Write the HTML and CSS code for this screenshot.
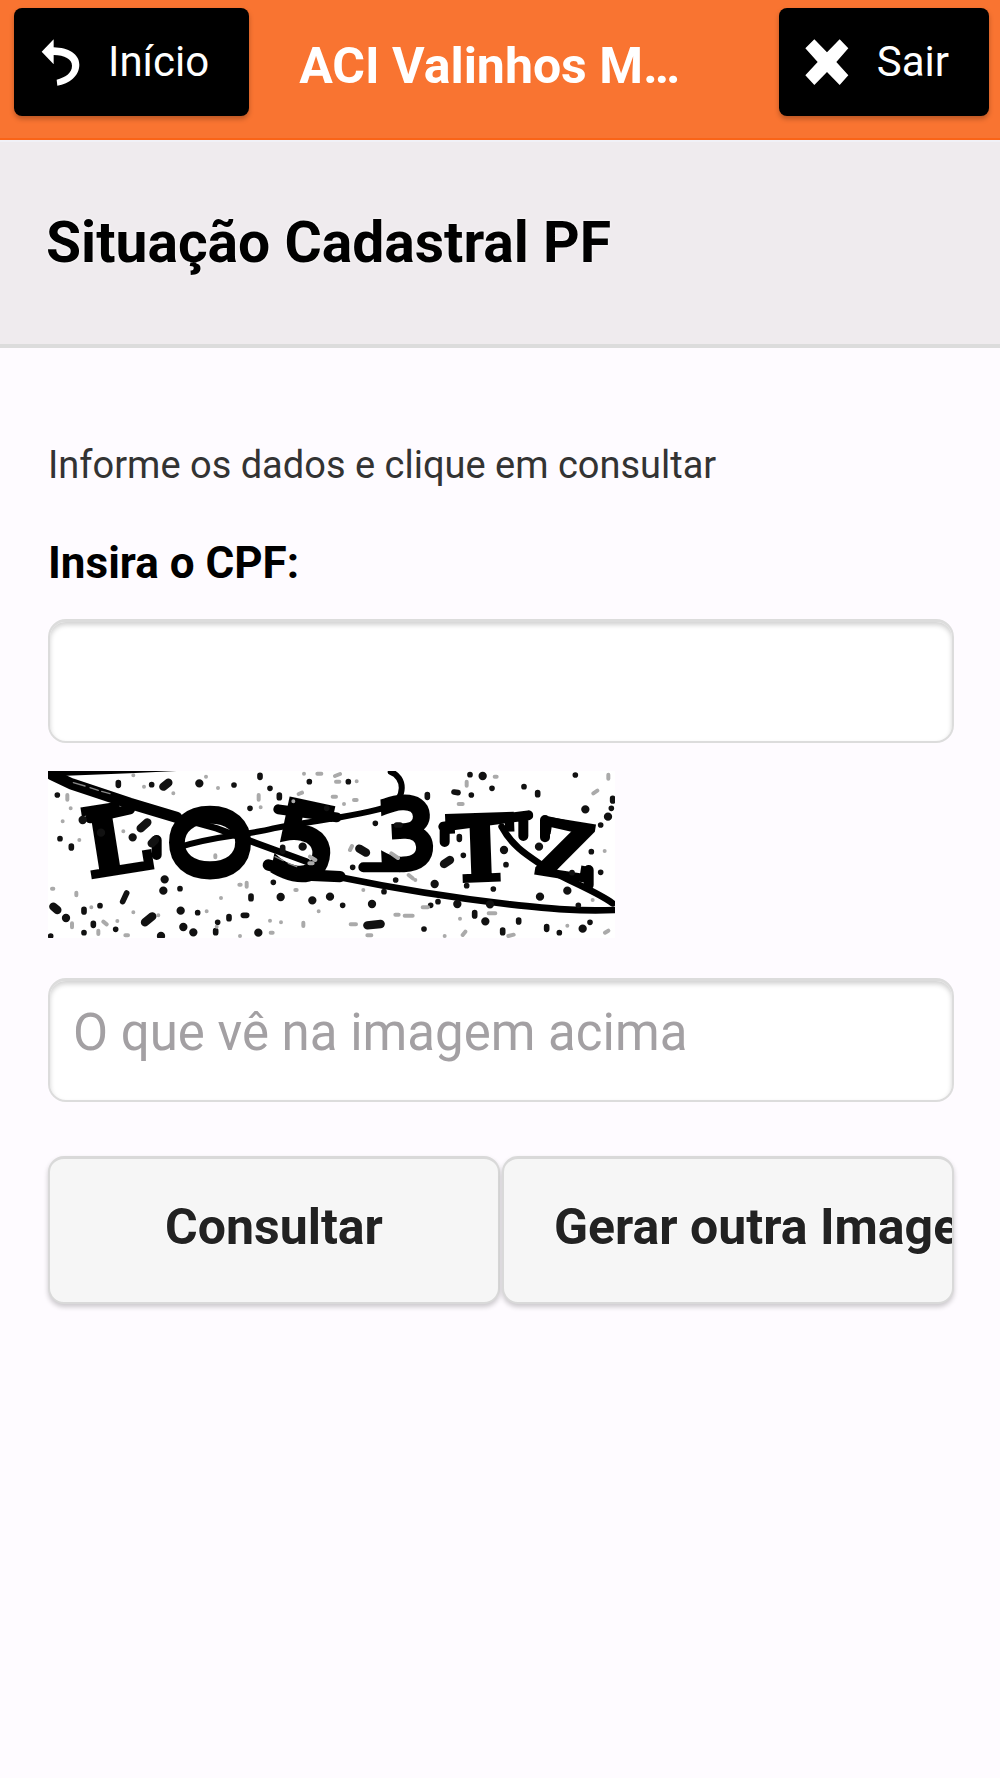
FILE: index.html
```html
<!DOCTYPE html>
<html lang="pt-BR">
<head>
<meta charset="utf-8">
<meta name="viewport" content="width=device-width, initial-scale=1">
<title>Situação Cadastral PF</title>
<link rel="stylesheet" href="styles.css">
</head>
<body>
<header class="topbar">
  <button class="nav-btn" type="button">
    <svg class="icon-back" viewBox="120 114 120 144" aria-hidden="true">
      <path d="M125 155L161 118V142C205 143 238 162 238 194C238 228 208 251 172 257L170 239C196 231 216 220 216 197C216 177 194 166 161 165V193Z" fill="#fff"/>
    </svg>
    <span>Início</span>
  </button>
  <p class="app-title">ACI Valinhos M…</p>
  <button class="nav-btn" type="button">
    <svg class="icon-close" viewBox="410 114 132 144" aria-hidden="true">
      <path d="M438 118L476 157L514 118L540 145L504 186L540 226L514 255L476 216L438 255L411 226L448 186L411 145Z" fill="#fff"/>
    </svg>
    <span>Sair</span>
  </button>
</header>
<div class="page-head">
  <h1>Situação Cadastral PF</h1>
</div>
<main>
  <form class="query">
    <p class="hint">Informe os dados e clique em consultar</p>
    <label class="label" for="cpf">Insira o CPF:</label>
    <input class="field" id="cpf" type="text">
    <svg class="captcha" viewBox="54 33 1701 501" role="img" aria-label="Captcha">
      <rect x="54" y="33" width="1701" height="501" fill="#fff"/>
      <g class="glyphs">
        <text class="slab" font-size="285" transform="rotate(-9 190 350)" x="176" y="352">L</text>
        <text class="plain" font-size="292" transform="rotate(90 537 248)" x="422" y="354">O</text>
        <text class="plain" font-size="300" transform="rotate(12 820 250)" x="730" y="352">5</text>
        <text class="plain" font-size="276" transform="rotate(-3 1100 230)" x="1042" y="322">3</text>
        <text class="slab" font-size="272" transform="rotate(-2 1350 360)" x="1254" y="362">T</text>
        <text class="slab" font-size="230" transform="rotate(9 1600 280)" x="1520" y="352">Z</text>
      </g>
      <g fill="none" stroke="#000" stroke-linecap="round">
        <path d="M54 33H440L300 40L90 48Z" fill="#000" stroke="none"/>
        <path d="M66 44L125 72L300 130L440 172" stroke-width="34"/>
        <path d="M440 172L560 205L680 250L830 305" stroke-width="20"/>
        <path d="M715 315L830 345L930 350" stroke-width="34"/>
        <path d="M930 352C1090 385 1280 415 1440 433C1560 446 1650 455 1755 450" stroke-width="20"/>
        <path d="M445 262C560 225 640 228 730 205C860 180 980 170 1075 140C1130 115 1125 50 1082 36" stroke-width="18"/>
        <path d="M1415 200C1450 265 1500 290 1550 325C1630 370 1700 395 1748 430" stroke-width="20"/>
        <path d="M180 175L300 148M1240 200L1495 166M1244 200V246M1480 170V228M1545 180V232M1545 182L1670 210M1676 330V375M1000 322H1110M745 148L920 172M380 240V285" stroke-width="30"/>
        <path d="M130 68L165 78M180 83L205 91M215 94L240 101M735 290L760 302M775 310L800 320" stroke="#888" stroke-width="4"/>
        <path d="M1516 150V240" stroke="#fff" stroke-width="12"/>
      </g>
      <g class="speck speck-lg">
        <path d="M508 70h0M400 80l15-12M158 180h0M308 232h0M332 205l20-18M365 250l10-10M400 392h0M404 358h0M752 411h0M847 421h0M452 452h0M460 501h0M70 440l12 10M108 474h0M345 487l22-18M685 518h0M490 517h0M393 528h0M900 410h0M1026 432h0M1012 496l40-4M1242 312l18-12M1358 48h0M1666 148h0M1734 170h0M1612 392h0M1380 433h0M1530 410h0M1527 260h0M1008 278l-20-12M1422 270h0M1282 432h0M1366 484h0M1658 506h0M818 260h0M213 218h0M1214 372h0"/>
      </g>
      <g class="speck speck-md">
        <path d="M82 105h0M265 68v8M365 74h0M612 75h0M690 46v6M838 65h0M720 85h0M748 105v8M660 145h0M90 236h0M124 258v6M450 386h0M663 408v8M730 367h0M278 425l12-26M162 448v8M210 437h0M190 490v6M257 508h0M162 518h0M503 458h0M597 470v6M640 466h10M563 487h0M557 512v6M955 65h0M1036 190h0M1100 195h10M1192 104v8M1272 96l12 2M1324 105h0M1320 44h0M1386 85h0M1482 80h0M1523 98v6M1636 45h0M1748 115v8M1744 145h0M1712 195h0M1684 275h0M1712 337h0M1288 230v8M1300 286h0M1428 314h0M1062 395h0M1097 360h0M1202 436h0M938 436h0M1182 507h0M1334 458v10M1466 480v6M1418 510v8M1550 500v8M1588 518h0M1680 487h0M1390 387h0M1310 377h0M1626 338h0M758 262v12M890 145h0M1645 436h0M1224 425h0M968 322h0M62 528h0"/>
      </g>
      <g class="speck speck-sm">
        <path d="M112 105v14M122 145h0M98 184h0M148 240h0M66 386h4M139 398v8M184 442h0M220 485l10 8M262 483h0M310 457h0M205 512v10M126 490v12M286 526h8M310 46h0M342 80h0M430 100h0M528 50h0M564 84h0M686 105v14M692 142h0M790 124h0M806 102l10-4M822 41h0M862 41h12M280 214h0M556 286v6M628 374h4M650 368v12M573 414h0M530 454h0M630 528h0M720 482h0M722 518h6M753 487h0M820 488v10M866 454h0M796 390h4M840 290l16 10M838 310h10M915 48l15-6M918 65h10M908 110h10M942 132h0M972 120h8M980 64h0M960 270l6-12M1084 280l20 14M1136 345l12 10M1156 360h0M1178 442h16M1096 464h10M1124 467h24M962 493h16M1012 526h12M1244 528h0M1306 515l-8 10M1290 476h0M1394 50h6M1310 65v12M1286 132h12M1735 44v12M1690 100l12-8M1724 273h0M1735 512l-10 6M1612 497h0M1376 460h20M1435 528l16-4M1688 420h0M1000 390h0M385 466h0M560 500h0"/>
      </g>
    </svg>
    <input class="field" type="text" placeholder="O que vê na imagem acima" aria-label="O que vê na imagem acima">
    <div class="actions">
      <button class="btn" type="submit">Consultar</button>
      <button class="btn btn-overflow" type="button">Gerar outra Imagem</button>
    </div>
  </form>
</main>
</body>
</html>
```
FILE: styles.css
```css
* {
  box-sizing: border-box;
}

body {
  margin: 0;
  min-height: 100vh;
  background: #fefbff;
  color: #000;
  font-family: Roboto, "Liberation Sans", sans-serif;
}

.topbar {
  display: flex;
  align-items: flex-start;
  justify-content: space-between;
  height: 140px;
  padding: 8px 11px 0 14px;
  background: #f97431;
  border-bottom: 2px solid #fa6418;
}

.nav-btn {
  display: flex;
  align-items: center;
  gap: 28px;
  height: 108px;
  padding: 0 40px 0 26px;
  border: 0;
  border-radius: 8px;
  background: #000;
  color: #fff;
  font: 400 42px/48px Roboto, "Liberation Sans", sans-serif;
  box-shadow: 0 3px 5px rgba(0, 0, 0, 0.25);
}

.icon-back {
  width: 40px;
  height: 48px;
}

.icon-close {
  width: 44px;
  height: 48px;
}

.app-title {
  margin: 0 auto 0 50px;
  padding-top: 28px;
  color: #fff;
  font-size: 50px;
  font-weight: 700;
  line-height: 60px;
  white-space: nowrap;
}

.page-head {
  padding: 68px 46px;
  background: #efebee;
  border-top: 2px solid #f1f1f7;
  border-bottom: 4px solid #dcdcdc;
}

.page-head h1 {
  margin: 0;
  font-size: 57px;
  font-weight: 700;
  line-height: 66px;
  text-shadow: 0 0 3px #fff;
}

.query {
  display: flex;
  flex-direction: column;
  padding: 93px 46px 0 48px;
}

.hint {
  margin: 0;
  color: #333;
  font-size: 38px;
  line-height: 48px;
}

.label {
  margin: 48px 0 30px;
  font-size: 44px;
  font-weight: 700;
  line-height: 52px;
}

.field {
  width: 100%;
  height: 124px;
  padding: 0 23px 16px;
  border: 2px solid #dcdcdc;
  border-top-width: 3px;
  border-radius: 18px;
  background: #fff;
  color: #333;
  font: 400 51px/60px Roboto, "Liberation Sans", sans-serif;
  box-shadow: inset 0 3px 5px rgba(0, 0, 0, 0.18);
}

.field::placeholder {
  color: #a3a0a3;
  opacity: 1;
}

.captcha {
  display: block;
  width: 567px;
  max-width: 100%;
  height: auto;
  margin: 28px 0 40px;
}

.glyphs {
  fill: #000;
  stroke: #000;
}

.slab {
  font-family: "DejaVu Serif", serif;
  font-weight: 700;
  stroke-width: 10px;
}

.plain {
  font-family: "DejaVu Sans", sans-serif;
  stroke-width: 24px;
}

.speck {
  fill: none;
  stroke: #111;
  stroke-linecap: round;
}

.speck-lg {
  stroke-width: 25px;
}

.speck-md {
  stroke-width: 17px;
}

.speck-sm {
  stroke: #aaa;
  stroke-width: 12px;
}

.actions {
  display: grid;
  grid-template-columns: 1fr 1fr;
  gap: 2px;
  margin-top: 54px;
}

.btn {
  min-width: 0;
  height: 148px;
  padding: 0 50px 8px;
  border: 2px solid #d9d9d9;
  border-top-width: 3px;
  border-radius: 16px;
  background: #f6f6f6;
  color: #222;
  font: 700 50px/60px Roboto, "Liberation Sans", sans-serif;
  white-space: nowrap;
  text-shadow: 0 0 3px #fff;
  box-shadow: 0 3px 5px rgba(0, 0, 0, 0.2);
}

.btn-overflow {
  overflow: hidden;
  text-align: left;
}
```
